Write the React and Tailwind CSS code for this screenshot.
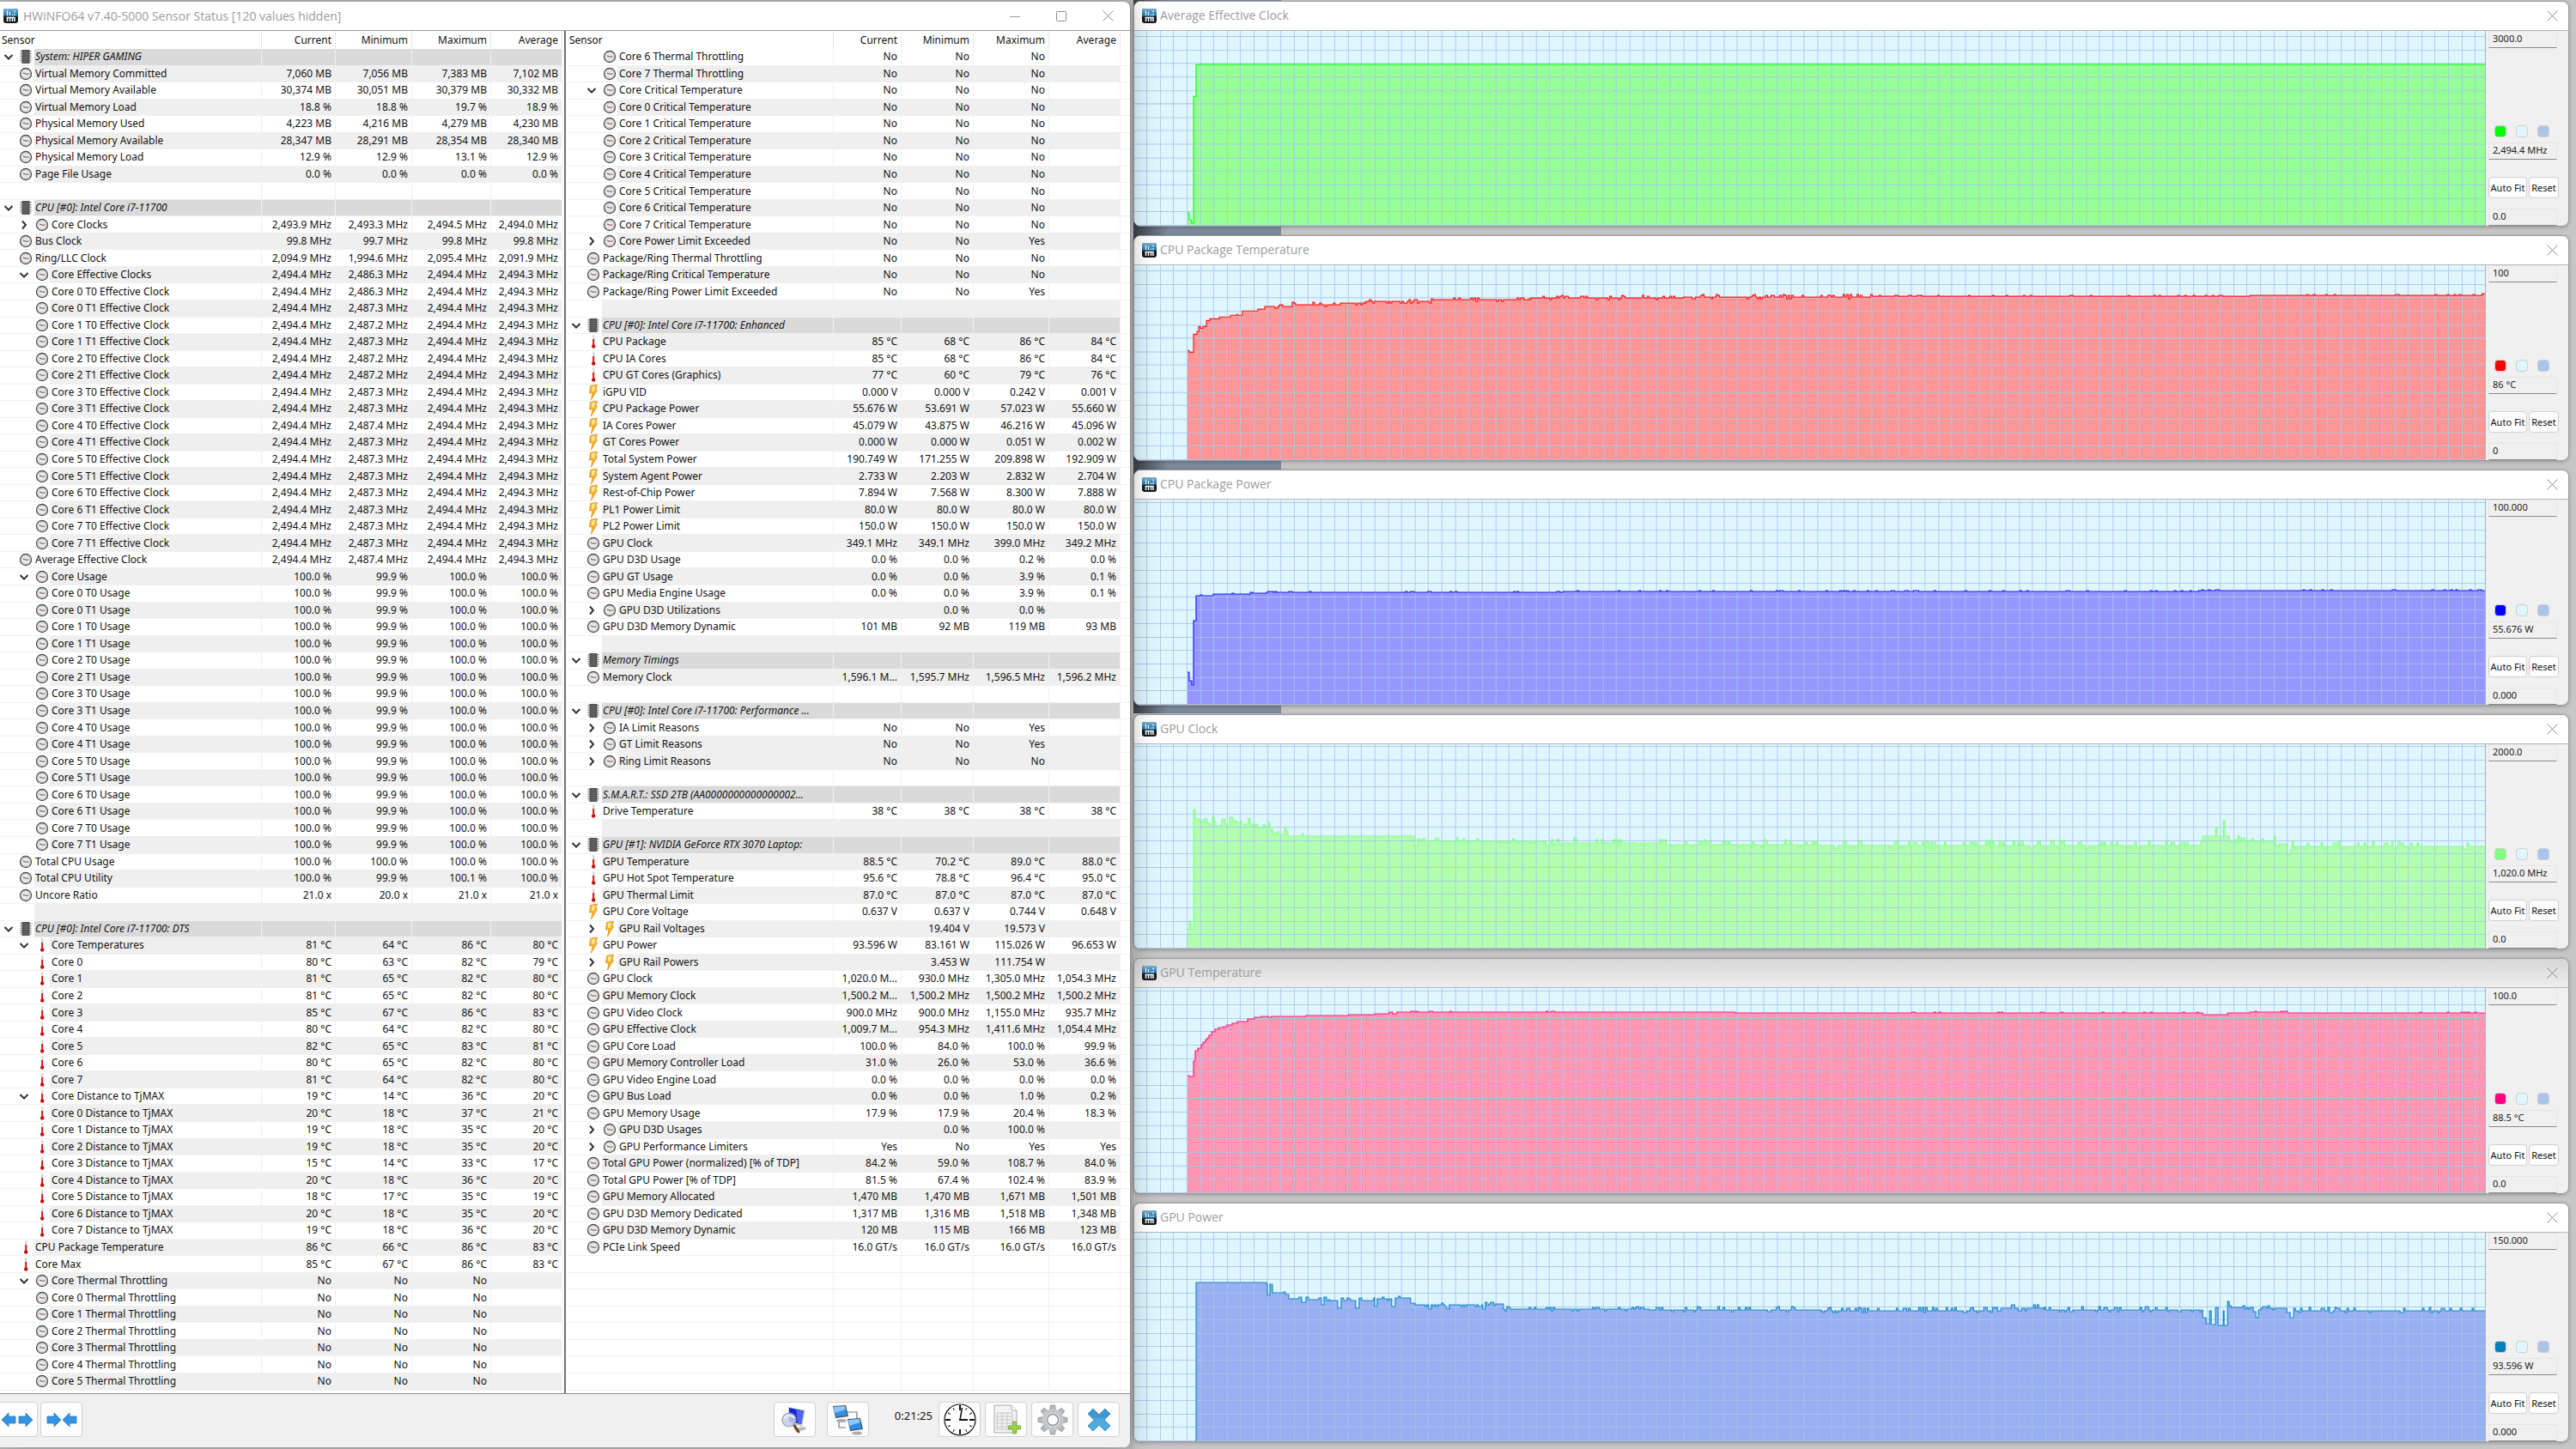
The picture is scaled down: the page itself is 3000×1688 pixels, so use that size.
const TEXT = "font-['Noto_Sans','DejaVu_Sans_Condensed',sans-serif]";
const CAPTION = "font-['Open_Sans','Noto_Sans',sans-serif]";

const group = (label) => ({ type: 'group', label, values: [] });
const blank = () => ({ type: 'blank', label: '', values: [] });
const item = (icon, label, values, extra = {}) => ({
    type: 'item', icon, label, values: values.split('|'), ...extra,
});
const sub = (icon, label, values, arrow) => item(icon, label, values, { nested: true, arrow });

const threads = (suffix, values) =>
    values.map((v, i) => sub('clock', `Core ${Math.floor(i / 2)} T${i % 2} ${suffix}`, v));

const clockMinimums = [
    '2,486.3', '2,487.3', '2,487.2', '2,487.3', '2,487.2', '2,487.2', '2,487.3', '2,487.3',
    '2,487.4', '2,487.3', '2,487.3', '2,487.3', '2,487.3', '2,487.3', '2,487.3', '2,487.3',
];

const leftRows = [
    group('System: HIPER GAMING'),
    item('clock', 'Virtual Memory Committed', '7,060 MB|7,056 MB|7,383 MB|7,102 MB'),
    item('clock', 'Virtual Memory Available', '30,374 MB|30,051 MB|30,379 MB|30,332 MB'),
    item('clock', 'Virtual Memory Load', '18.8 %|18.8 %|19.7 %|18.9 %'),
    item('clock', 'Physical Memory Used', '4,223 MB|4,216 MB|4,279 MB|4,230 MB'),
    item('clock', 'Physical Memory Available', '28,347 MB|28,291 MB|28,354 MB|28,340 MB'),
    item('clock', 'Physical Memory Load', '12.9 %|12.9 %|13.1 %|12.9 %'),
    item('clock', 'Page File Usage', '0.0 %|0.0 %|0.0 %|0.0 %'),
    blank(),
    group('CPU [#0]: Intel Core i7-11700'),
    sub('clock', 'Core Clocks', '2,493.9 MHz|2,493.3 MHz|2,494.5 MHz|2,494.0 MHz', 'closed'),
    item('clock', 'Bus Clock', '99.8 MHz|99.7 MHz|99.8 MHz|99.8 MHz'),
    item('clock', 'Ring/LLC Clock', '2,094.9 MHz|1,994.6 MHz|2,095.4 MHz|2,091.9 MHz'),
    sub('clock', 'Core Effective Clocks', '2,494.4 MHz|2,486.3 MHz|2,494.4 MHz|2,494.3 MHz', 'open'),
    ...threads('Effective Clock', clockMinimums.map((m) => `2,494.4 MHz|${m} MHz|2,494.4 MHz|2,494.3 MHz`)),
    item('clock', 'Average Effective Clock', '2,494.4 MHz|2,487.4 MHz|2,494.4 MHz|2,494.3 MHz'),
    sub('clock', 'Core Usage', '100.0 %|99.9 %|100.0 %|100.0 %', 'open'),
    ...threads('Usage', clockMinimums.map(() => '100.0 %|99.9 %|100.0 %|100.0 %')),
    item('clock', 'Total CPU Usage', '100.0 %|100.0 %|100.0 %|100.0 %'),
    item('clock', 'Total CPU Utility', '100.0 %|99.9 %|100.1 %|100.0 %'),
    item('clock', 'Uncore Ratio', '21.0 x|20.0 x|21.0 x|21.0 x'),
    blank(),
    group('CPU [#0]: Intel Core i7-11700: DTS'),
    sub('temp', 'Core Temperatures', '81 °C|64 °C|86 °C|80 °C', 'open'),
    sub('temp', 'Core 0', '80 °C|63 °C|82 °C|79 °C'),
    sub('temp', 'Core 1', '81 °C|65 °C|82 °C|80 °C'),
    sub('temp', 'Core 2', '81 °C|65 °C|82 °C|80 °C'),
    sub('temp', 'Core 3', '85 °C|67 °C|86 °C|83 °C'),
    sub('temp', 'Core 4', '80 °C|64 °C|82 °C|80 °C'),
    sub('temp', 'Core 5', '82 °C|65 °C|83 °C|81 °C'),
    sub('temp', 'Core 6', '80 °C|65 °C|82 °C|80 °C'),
    sub('temp', 'Core 7', '81 °C|64 °C|82 °C|80 °C'),
    sub('temp', 'Core Distance to TjMAX', '19 °C|14 °C|36 °C|20 °C', 'open'),
    sub('temp', 'Core 0 Distance to TjMAX', '20 °C|18 °C|37 °C|21 °C'),
    sub('temp', 'Core 1 Distance to TjMAX', '19 °C|18 °C|35 °C|20 °C'),
    sub('temp', 'Core 2 Distance to TjMAX', '19 °C|18 °C|35 °C|20 °C'),
    sub('temp', 'Core 3 Distance to TjMAX', '15 °C|14 °C|33 °C|17 °C'),
    sub('temp', 'Core 4 Distance to TjMAX', '20 °C|18 °C|36 °C|20 °C'),
    sub('temp', 'Core 5 Distance to TjMAX', '18 °C|17 °C|35 °C|19 °C'),
    sub('temp', 'Core 6 Distance to TjMAX', '20 °C|18 °C|35 °C|20 °C'),
    sub('temp', 'Core 7 Distance to TjMAX', '19 °C|18 °C|36 °C|20 °C'),
    item('temp', 'CPU Package Temperature', '86 °C|66 °C|86 °C|83 °C'),
    item('temp', 'Core Max', '85 °C|67 °C|86 °C|83 °C'),
    sub('clock', 'Core Thermal Throttling', 'No|No|No|', 'open'),
    ...[0, 1, 2, 3, 4, 5].map((n) => sub('clock', `Core ${n} Thermal Throttling`, 'No|No|No|')),
];

const rightRows = [
    sub('clock', 'Core 6 Thermal Throttling', 'No|No|No|'),
    sub('clock', 'Core 7 Thermal Throttling', 'No|No|No|'),
    sub('clock', 'Core Critical Temperature', 'No|No|No|', 'open'),
    ...[0, 1, 2, 3, 4, 5, 6, 7].map((n) => sub('clock', `Core ${n} Critical Temperature`, 'No|No|No|')),
    sub('clock', 'Core Power Limit Exceeded', 'No|No|Yes|', 'closed'),
    item('clock', 'Package/Ring Thermal Throttling', 'No|No|No|'),
    item('clock', 'Package/Ring Critical Temperature', 'No|No|No|'),
    item('clock', 'Package/Ring Power Limit Exceeded', 'No|No|Yes|'),
    blank(),
    group('CPU [#0]: Intel Core i7-11700: Enhanced'),
    item('temp', 'CPU Package', '85 °C|68 °C|86 °C|84 °C'),
    item('temp', 'CPU IA Cores', '85 °C|68 °C|86 °C|84 °C'),
    item('temp', 'CPU GT Cores (Graphics)', '77 °C|60 °C|79 °C|76 °C'),
    item('bolt', 'iGPU VID', '0.000 V|0.000 V|0.242 V|0.001 V'),
    item('bolt', 'CPU Package Power', '55.676 W|53.691 W|57.023 W|55.660 W'),
    item('bolt', 'IA Cores Power', '45.079 W|43.875 W|46.216 W|45.096 W'),
    item('bolt', 'GT Cores Power', '0.000 W|0.000 W|0.051 W|0.002 W'),
    item('bolt', 'Total System Power', '190.749 W|171.255 W|209.898 W|192.909 W'),
    item('bolt', 'System Agent Power', '2.733 W|2.203 W|2.832 W|2.704 W'),
    item('bolt', 'Rest-of-Chip Power', '7.894 W|7.568 W|8.300 W|7.888 W'),
    item('bolt', 'PL1 Power Limit', '80.0 W|80.0 W|80.0 W|80.0 W'),
    item('bolt', 'PL2 Power Limit', '150.0 W|150.0 W|150.0 W|150.0 W'),
    item('clock', 'GPU Clock', '349.1 MHz|349.1 MHz|399.0 MHz|349.2 MHz'),
    item('clock', 'GPU D3D Usage', '0.0 %|0.0 %|0.2 %|0.0 %'),
    item('clock', 'GPU GT Usage', '0.0 %|0.0 %|3.9 %|0.1 %'),
    item('clock', 'GPU Media Engine Usage', '0.0 %|0.0 %|3.9 %|0.1 %'),
    sub('clock', 'GPU D3D Utilizations', '|0.0 %|0.0 %|', 'closed'),
    item('clock', 'GPU D3D Memory Dynamic', '101 MB|92 MB|119 MB|93 MB'),
    blank(),
    group('Memory Timings'),
    item('clock', 'Memory Clock', '1,596.1 M...|1,595.7 MHz|1,596.5 MHz|1,596.2 MHz'),
    blank(),
    group('CPU [#0]: Intel Core i7-11700: Performance ...'),
    sub('clock', 'IA Limit Reasons', 'No|No|Yes|', 'closed'),
    sub('clock', 'GT Limit Reasons', 'No|No|Yes|', 'closed'),
    sub('clock', 'Ring Limit Reasons', 'No|No|No|', 'closed'),
    blank(),
    group('S.M.A.R.T.: SSD 2TB (AA0000000000000002...'),
    item('temp', 'Drive Temperature', '38 °C|38 °C|38 °C|38 °C'),
    blank(),
    group('GPU [#1]: NVIDIA GeForce RTX 3070 Laptop:'),
    item('temp', 'GPU Temperature', '88.5 °C|70.2 °C|89.0 °C|88.0 °C'),
    item('temp', 'GPU Hot Spot Temperature', '95.6 °C|78.8 °C|96.4 °C|95.0 °C'),
    item('temp', 'GPU Thermal Limit', '87.0 °C|87.0 °C|87.0 °C|87.0 °C'),
    item('bolt', 'GPU Core Voltage', '0.637 V|0.637 V|0.744 V|0.648 V'),
    sub('bolt', 'GPU Rail Voltages', '|19.404 V|19.573 V|', 'closed'),
    item('bolt', 'GPU Power', '93.596 W|83.161 W|115.026 W|96.653 W'),
    sub('bolt', 'GPU Rail Powers', '|3.453 W|111.754 W|', 'closed'),
    item('clock', 'GPU Clock', '1,020.0 M...|930.0 MHz|1,305.0 MHz|1,054.3 MHz'),
    item('clock', 'GPU Memory Clock', '1,500.2 M...|1,500.2 MHz|1,500.2 MHz|1,500.2 MHz'),
    item('clock', 'GPU Video Clock', '900.0 MHz|900.0 MHz|1,155.0 MHz|935.7 MHz'),
    item('clock', 'GPU Effective Clock', '1,009.7 M...|954.3 MHz|1,411.6 MHz|1,054.4 MHz'),
    item('clock', 'GPU Core Load', '100.0 %|84.0 %|100.0 %|99.9 %'),
    item('clock', 'GPU Memory Controller Load', '31.0 %|26.0 %|53.0 %|36.6 %'),
    item('clock', 'GPU Video Engine Load', '0.0 %|0.0 %|0.0 %|0.0 %'),
    item('clock', 'GPU Bus Load', '0.0 %|0.0 %|1.0 %|0.2 %'),
    item('clock', 'GPU Memory Usage', '17.9 %|17.9 %|20.4 %|18.3 %'),
    sub('clock', 'GPU D3D Usages', '|0.0 %|100.0 %|', 'closed'),
    sub('clock', 'GPU Performance Limiters', 'Yes|No|Yes|Yes', 'closed'),
    item('clock', 'Total GPU Power (normalized) [% of TDP]', '84.2 %|59.0 %|108.7 %|84.0 %'),
    item('clock', 'Total GPU Power [% of TDP]', '81.5 %|67.4 %|102.4 %|83.9 %'),
    item('clock', 'GPU Memory Allocated', '1,470 MB|1,470 MB|1,671 MB|1,501 MB'),
    item('clock', 'GPU D3D Memory Dedicated', '1,317 MB|1,316 MB|1,518 MB|1,348 MB'),
    item('clock', 'GPU D3D Memory Dynamic', '120 MB|115 MB|166 MB|123 MB'),
    item('clock', 'PCIe Link Speed', '16.0 GT/s|16.0 GT/s|16.0 GT/s|16.0 GT/s'),
];

const ROW_COUNT = 80;
while (rightRows.length < ROW_COUNT) rightRows.push({ type: 'empty', label: '', values: [] });

const leftShaded = (i) => i % 2 === 1;
const rightShaded = (i) => (i < 42 ? i % 2 === 1 : i % 2 === 0);

// levels: [x, y, jitter] - the line keeps y until the next x
const graphs = [
    {
        title: 'Average Effective Clock', max: '3000.0', now: '2,494.4 MHz', min: '0.0',
        height: 226, line: '#00ff00', fill: '#96ff96', swatch: 'bg-[#00ff00]',
        levels: [[62, 211], [64, 219], [66, 221], [67, 223], [69, 76], [72, 39]],
    },
    {
        title: 'CPU Package Temperature', max: '100', now: '86 °C', min: '0',
        height: 226, line: '#ff0000', fill: '#ff9696', swatch: 'bg-[#ff0000]',
        levels: [
            [62, 99], [64, 101], [69, 80], [73, 77], [75, 71], [77, 73], [80, 71], [84, 64], [88, 62], [99, 60],
            [112, 58], [119, 57], [121, 58], [126, 53], [144, 51], [152, 48], [164, 50], [167, 48, 2], [184, 46, 2],
            [240, 44, 2], [268, 42, 2], [350, 40, 2], [460, 38, 2], [640, 37, 2], [860, 36, 1], [1300, 35, 1], [1571, 33],
        ],
    },
    {
        title: 'CPU Package Power', max: '100.000', now: '55.676 W', min: '0.000',
        height: 239, line: '#0000ff', fill: '#9696ff', swatch: 'bg-[#0000ff]',
        levels: [
            [62, 201], [64, 211], [67, 216], [69, 141], [72, 112], [77, 111], [79, 112], [92, 110], [114, 109],
            [116, 110], [135, 108], [138, 109], [154, 108], [156, 107], [162, 108, 1], [500, 107, 1], [1240, 106, 1],
        ],
    },
    {
        title: 'GPU Clock', max: '2000.0', now: '1,020.0 MHz', min: '0.0',
        height: 238, line: '#80ff80', fill: '#b2ffb0', swatch: 'bg-[#80ff80]',
        levels: [
            [62, 215], [64, 206], [66, 215], [69, 76], [71, 87], [76, 89], [79, 91], [81, 87], [85, 92], [88, 94],
            [91, 84], [93, 90], [95, 95], [102, 87], [106, 93], [108, 95], [111, 85], [115, 89], [119, 91], [124, 89],
            [125, 97], [128, 93], [133, 86], [135, 93], [138, 95], [141, 93], [144, 97], [150, 94], [153, 97],
            [157, 91], [158, 99], [161, 103], [164, 106], [166, 102], [168, 105], [175, 97], [177, 101], [179, 107],
            [195, 104], [197, 107], [326, 118], [330, 110], [333, 113, 3], [480, 115, 4], [620, 117, 4], [800, 118, 4],
            [1243, 113], [1245, 107], [1260, 97], [1262, 107], [1269, 89], [1271, 107], [1276, 114, 3], [1286, 107],
            [1288, 113, 3], [1328, 107], [1330, 116, 3], [1344, 128], [1347, 123], [1349, 113], [1351, 119, 4],
        ],
    },
    {
        title: 'GPU Temperature', max: '100.0', now: '88.5 °C', min: '0.0', dim: true,
        height: 239, line: '#ff0080', fill: '#ff96b2', swatch: 'bg-[#ff0080]',
        levels: [
            [62, 102], [64, 103], [69, 85], [71, 73], [74, 70], [78, 66], [80, 63], [83, 60], [85, 58], [87, 55],
            [90, 51], [94, 48], [98, 46], [104, 45], [108, 43], [114, 41], [120, 39], [132, 36], [140, 34], [148, 33],
            [156, 34], [160, 33], [200, 32], [250, 31], [280, 30], [297, 28], [301, 30], [306, 28], [322, 27],
            [326, 28, 1], [500, 28], [700, 29], [900, 29, 1], [1245, 31, 1], [1274, 29], [1300, 28, 1], [1344, 29], [1480, 29, 1],
        ],
    },
    {
        title: 'GPU Power', max: '150.000', now: '93.596 W', min: '0.000',
        height: 243, line: '#0080c0', fill: '#96b0f2', swatch: 'bg-[#0080c0]',
        levels: [
            [72, 243], [72, 58], [154, 60], [155, 73], [158, 60], [161, 70], [174, 69], [176, 72], [180, 77], [192, 75],
            [195, 81], [200, 75], [203, 78], [215, 76], [218, 84], [221, 75], [224, 79, 1], [237, 88], [241, 76],
            [244, 79, 2], [258, 88], [262, 76], [265, 79, 2], [280, 86], [283, 77, 2], [300, 86], [304, 76, 2],
            [322, 82], [327, 84, 2], [343, 89], [346, 84, 2], [364, 89], [367, 84, 2], [406, 89], [409, 83, 2],
            [430, 89, 2], [600, 90, 3], [800, 91, 3], [1010, 88, 4], [1060, 90, 3], [1245, 99], [1249, 106],
            [1253, 91], [1255, 107], [1260, 87], [1263, 108], [1269, 91], [1270, 108], [1274, 80], [1276, 87, 2],
            [1304, 92], [1307, 99], [1310, 90], [1313, 88, 2], [1343, 93], [1347, 99], [1351, 91, 3],
        ],
    },
];

const GRAPH_WIDTH = 1574;

function stepPath(levels) {
    let seed = 4211;
    let d = `M${levels[0][0]} ${levels[0][1]}`;
    levels.forEach(([x, y, jitter], i) => {
        d += `H${x}V${y}`;
        if (!jitter) return;
        const stop = levels[i + 1] ? levels[i + 1][0] : GRAPH_WIDTH;
        for (let px = x; px < stop; px += 2) {
            seed = (seed * 16807) % 2147483647;
            const r = seed / 2147483647;
            let dy = 0;
            if (jitter === 1) dy = r > 0.9 ? -1 : 0;
            else if (r > 0.95) dy = -jitter * 1.5;
            else if (r > 0.82) dy = -jitter;
            else if (r > 0.72) dy = jitter * 0.8;
            d += `H${px}V${Math.round(y + dy)}`;
        }
    });
    return `${d}H${GRAPH_WIDTH}`;
}

function AppIcon() {
    return (
        <svg viewBox="0 0 17 17" className="size-[17px] shrink-0" aria-hidden="true">
            <defs>
                <linearGradient id="appBlue" x1="0" y1="0" x2="0" y2="1">
                    <stop offset="0" stopColor="#7fb4d2" />
                    <stop offset="1" stopColor="#0a6aa6" />
                </linearGradient>
            </defs>
            <rect width="17" height="17" rx="3" fill="#15181c" />
            <path d="M3 0h11a3 3 0 0 1 3 3v6H0V3a3 3 0 0 1 3-3z" fill="url(#appBlue)" />
            <path d="M4.500 2.500v5.500M7.500 4v4M10.500 6.500V8M13 2.500v2M13 6v2" stroke="#fff" strokeWidth="1.300" />
            <path d="M4.500 10v5M7.500 10v5M10.500 10v5M13 10v5M3.500 10.500h10" stroke="#fff" strokeWidth="1.500" />
        </svg>
    );
}

function ClockIcon() {
    return (
        <svg viewBox="0 0 16 16" className="size-4 shrink-0" aria-hidden="true">
            <circle cx="8" cy="8" r="6.500" fill="#e9e9e9" stroke="#4c4c4c" strokeWidth="1.300" />
            <circle cx="8" cy="8" r="4.800" fill="none" stroke="#cfcfcf" strokeWidth="1" />
            <path d="M5 7l3 1.300 3.500-.3" fill="none" stroke="#7a5346" strokeWidth="1.100" />
        </svg>
    );
}

function TempIcon() {
    return (
        <svg viewBox="0 0 16 16" className="size-4 shrink-0" aria-hidden="true">
            <rect x="7" y="0" width="2.500" height="12" rx="1.200" fill="#d9d9d9" />
            <rect x="7.200" y="5" width="1.900" height="8" fill="#d21414" />
            <circle cx="8.200" cy="13.500" r="2.200" fill="#c80c0c" />
        </svg>
    );
}

function BoltIcon() {
    return (
        <svg viewBox="0 0 16 18" className="h-[18px] w-4 shrink-0" aria-hidden="true">
            <path d="M4.500 1.500L12.500 0l-1.500 6 1.500.5L5.500 18l1.500-8.500-3.500.5z" fill="#f9b32c" stroke="#d98a14" strokeWidth=".7" />
            <path d="M6 2.500l4.500-1L9 7.500 6 8z" fill="#ffe38a" />
        </svg>
    );
}

function ChipIcon() {
    return (
        <svg viewBox="0 0 16 16" className="size-4 shrink-0" aria-hidden="true">
            <path d="M2.500 1v14M13.500 1v14" stroke="#8a8a8a" strokeWidth="2" strokeDasharray="1.500 1.200" />
            <rect x="3.500" y="0" width="9" height="16" fill="#505050" />
            <rect x="5" y="1" width="6" height="14" fill="#5e5e5e" />
        </svg>
    );
}

const icons = { clock: ClockIcon, temp: TempIcon, bolt: BoltIcon };

function Arrow({ open, label }) {
    return (
        <button type="button" aria-label={`Toggle ${label}`} className="flex size-3 items-center justify-center">
            <svg viewBox="0 0 12 12" className="size-3" fill="none" stroke="#333" strokeWidth="2">
                <path d={open ? 'M1.500 4L6 8.500 10.500 4' : 'M4 1.500L8 6l-4 4.500'} />
            </svg>
        </button>
    );
}

function NameCell({ row, shaded }) {
    let bg = 'bg-white';
    if (row.type === 'group') bg = 'bg-[linear-gradient(90deg,#fff_40px,#dadada_40px)]';
    else if (shaded && row.nested) bg = 'bg-[linear-gradient(90deg,#fff_58px,#efefef_58px)]';
    else if (shaded && row.type !== 'empty') bg = 'bg-[linear-gradient(90deg,#fff_40px,#efefef_40px)]';
    const Icon = row.type === 'group' ? ChipIcon : icons[row.icon];

    return (
        <th scope="row" className={`overflow-hidden border-r border-b border-[#f0f0f0] p-0 text-left font-normal ${bg}`}>
            {Icon && (
                <div className="flex h-4 items-center whitespace-nowrap">
                    <span className={`flex shrink-0 ${row.nested ? 'w-[41px] pl-[22px]' : 'w-[22px] pl-1'}`}>
                        {(row.type === 'group' || row.arrow) && (
                            <Arrow open={row.type === 'group' || row.arrow === 'open'} label={row.label} />
                        )}
                    </span>
                    <Icon />
                    <span className={`pl-[3px] ${row.type === 'group' ? 'italic' : ''}`}>{row.label}</span>
                </div>
            )}
        </th>
    );
}

function SensorTable({ rows, isShaded, columns, name }) {
    return (
        <table aria-label={name} className="h-full w-full table-fixed border-separate border-spacing-0 text-xs leading-4 text-[#111]">
            <colgroup>
                <col />
                {columns.map((width, i) => <col key={i} className={width} />)}
            </colgroup>
            <thead>
                <tr className="h-[21px]">
                    <th className="border-r border-[#e5e5e5] p-0 pl-0.5 text-left font-normal">Sensor</th>
                    {['Current', 'Minimum', 'Maximum', 'Average'].map((h) => (
                        <th key={h} className="border-r border-[#e5e5e5] p-0 pr-1 text-right font-normal">{h}</th>
                    ))}
                    {columns.length > 4 && <td />}
                </tr>
            </thead>
            <tbody>
                {rows.map((row, i) => {
                    let bg = 'bg-white';
                    if (row.type === 'group') bg = 'bg-[#dadada]';
                    else if (isShaded(i) && row.type !== 'empty') bg = 'bg-[#efefef]';
                    return (
                        <tr key={i} className="h-[19px]">
                            <NameCell row={row} shaded={isShaded(i)} />
                            {[0, 1, 2, 3].map((c) => (
                                <td key={c} className={`border-r border-b border-[#f0f0f0] p-0 pr-1 text-right whitespace-nowrap ${bg}`}>
                                    {row.values[c]}
                                </td>
                            ))}
                            {columns.length > 4 && <td className="border-b border-[#f0f0f0] p-0" />}
                        </tr>
                    );
                })}
            </tbody>
        </table>
    );
}

function ToolButton({ label, children }) {
    return (
        <button
            type="button"
            aria-label={label}
            className="flex h-[41px] w-[49px] shrink-0 items-center justify-center rounded border border-[#d2d2d2] bg-[#fdfdfd]"
        >
            {children}
        </button>
    );
}

function Toolbar() {
    return (
        <footer className="flex h-[63px] shrink-0 items-start border-t border-[#8c8c8c] bg-[#f0f0f0] pt-[9px] pr-3">
            <div className="-ml-[5px] flex gap-[3px]">
                <ToolButton label="Expand columns">
                    <svg viewBox="0 0 38 20" className="h-5 w-[38px]" fill="#3393e2" stroke="#2a7cc4" strokeWidth=".8">
                        <path d="M1 10l8-8v4h8v8H9v4zM37 10l-8-8v4h-8v8h8v4z" />
                    </svg>
                </ToolButton>
                <ToolButton label="Shrink columns">
                    <svg viewBox="0 0 38 20" className="h-5 w-[38px]" fill="#3393e2" stroke="#2a7cc4" strokeWidth=".8">
                        <path d="M18 10l-8-8v4H2v8h8v4zM20 10l8-8v4h8v8h-8v4z" />
                    </svg>
                </ToolButton>
            </div>
            <div className="ml-auto flex items-start">
                <ToolButton label="Find sensor">
                    <svg viewBox="0 0 34 34" className="size-[34px]">
                        <path d="M10 2l20 4-4 19-16-4z" fill="#c9ccd4" />
                        <path d="M11 3l17 3.500L25 22l-14-3z" fill="#1526c9" />
                        <path d="M19 5l9 1.500L25 22l-4-1z" fill="#4a68e8" />
                        <path d="M16 27l13-2 2 3-12 3z" fill="#b5b8bd" />
                        <path d="M16 22l6 9" stroke="#6d4220" strokeWidth="3" strokeLinecap="round" />
                        <circle cx="11" cy="17" r="8" fill="#c3cfea" fillOpacity=".85" stroke="#9aa0aa" strokeWidth="1.200" />
                        <path d="M5 16c2-5 9-5 12-1" fill="none" stroke="#eef4ff" strokeWidth="2" />
                    </svg>
                </ToolButton>
                <div className="ml-[13px]">
                    <ToolButton label="Remote sensors">
                        <svg viewBox="0 0 40 38" className="h-[38px] w-10">
                            <path d="M18 10h13v10M10 20v8h8" fill="none" stroke="#777" strokeWidth="1.200" />
                            <path d="M3 3l15-1 3 13-15 2z" fill="#4b5158" />
                            <path d="M4 4l13-1 2.500 11L6 15.500z" fill="#2f8fe6" />
                            <path d="M4 4l13-1 .8 4L5 11z" fill="#8cc8fa" />
                            <ellipse cx="13" cy="20" rx="6" ry="2" fill="#a9adb2" />
                            <path d="M20 18l15-1 3 13-15 2z" fill="#4b5158" />
                            <path d="M21 19l13-1 2.500 11L23 30.500z" fill="#2f8fe6" />
                            <path d="M21 19l13-1 .8 4L22 26z" fill="#8cc8fa" />
                            <ellipse cx="31" cy="34.500" rx="6" ry="2" fill="#a9adb2" />
                        </svg>
                    </ToolButton>
                </div>
                <span className="mr-[7px] ml-[30px] pt-2 text-[13px] leading-4 text-[#111]">0:21:25</span>
                <div className="flex gap-[5px]">
                    <ToolButton label="Reset timer">
                        <svg viewBox="0 0 38 38" className="size-[38px]" stroke="#111">
                            <circle cx="19" cy="19" r="18" fill="#fff" strokeWidth="1.200" />
                            {Array.from({ length: 12 }, (_, i) => (
                                <path
                                    key={i}
                                    d={i % 3 ? 'M19 3v3' : 'M19 2v6'}
                                    strokeWidth={i % 3 ? 1 : 2}
                                    transform={`rotate(${i * 30} 19 19)`}
                                />
                            ))}
                            <path d="M19 19l2.500-14" strokeWidth="1.500" />
                            <path d="M18 19h10" strokeWidth="2" />
                        </svg>
                    </ToolButton>
                    <ToolButton label="Start logging">
                        <svg viewBox="0 0 36 36" className="size-9">
                            <path d="M4 1h20l6 6v26H4z" fill="#f2f2f2" stroke="#a9a9a9" />
                            <path d="M24 1v6h6" fill="#fff" stroke="#a9a9a9" />
                            <path d="M7 10h18M7 14h18M7 18h18M7 22h18M7 26h18M7 29h18M7 10v19M13 10v19M19 10v19M25 10v19" fill="none" stroke="#c6c6c6" />
                            <path d="M25.500 20h4v5h5v4h-5v5h-4v-5h-5v-4h5z" fill="#9bd04a" stroke="#7fb238" />
                        </svg>
                    </ToolButton>
                    <ToolButton label="Settings">
                        <svg viewBox="0 0 38 38" className="size-[38px]" stroke="#8f9496" strokeWidth=".8">
                            {Array.from({ length: 8 }, (_, i) => (
                                <path key={i} d="M15.500 8l1-6h5l1 6z" fill="#b4b9bb" transform={`rotate(${i * 45} 19 19)`} />
                            ))}
                            <circle cx="19" cy="19" r="12.500" fill="#c3c7c9" stroke="none" />
                            <circle cx="19" cy="19" r="9" fill="#e2e4e5" stroke="#b3b8ba" />
                            <circle cx="19" cy="19" r="6.500" fill="#fdfdfd" strokeWidth="1.500" />
                        </svg>
                    </ToolButton>
                    <ToolButton label="Close sensors">
                        <svg viewBox="0 0 30 30" className="size-[30px]">
                            <path d="M8 2l7 7 7-7 6 6-7 7 7 7-6 6-7-7-7 7-6-6 7-7-7-7z" fill="#4fabde" stroke="#3b93c8" />
                            <path d="M8 2l7 7 7-7 6 6-5 5H7L2 8z" fill="#2f86bd" fillOpacity=".5" />
                        </svg>
                    </ToolButton>
                </div>
            </div>
        </footer>
    );
}

function CloseGlyph() {
    return (
        <svg viewBox="0 0 13 13" className="size-[13px]" stroke="#8a8a8a" fill="none">
            <path d="M.5.5l12 12M12.500.5l-12 12" />
        </svg>
    );
}

function SensorWindow() {
    return (
        <section className="relative z-10 my-0.5 flex min-h-0 flex-1 flex-col overflow-hidden rounded-r-lg border-r border-[#8f8f8f] bg-white shadow-[0_0_30px_rgba(0,0,0,0.3)]">
            <header className={`flex h-[34px] shrink-0 items-center border-b border-[#9a9ca0] pl-1 ${CAPTION}`}>
                <AppIcon />
                <h1 className="pl-1.5 text-sm text-[#9b9b9b]">HWiNFO64 v7.40-5000 Sensor Status [120 values hidden]</h1>
                <div className="ml-auto flex items-center gap-[42px] pr-[19px]">
                    <button type="button" aria-label="Minimize" className="flex size-3 items-center">
                        <svg viewBox="0 0 12 12" className="size-3" stroke="#999"><path d="M0 6.500h12" /></svg>
                    </button>
                    <button type="button" aria-label="Maximize">
                        <svg viewBox="0 0 12 12" className="size-3" stroke="#888" fill="none">
                            <rect x=".5" y=".5" width="11" height="11" rx="1" />
                        </svg>
                    </button>
                    <button type="button" aria-label="Close"><CloseGlyph /></button>
                </div>
            </header>
            <div className="flex min-h-0 flex-1">
                <div className="flex-1 pr-0.5 pb-[3px]">
                    <SensorTable
                        name="Sensors, first column"
                        rows={leftRows}
                        isShaded={leftShaded}
                        columns={['w-[86px]', 'w-[89px]', 'w-[92px]', 'w-[83px]']}
                    />
                </div>
                <div className="flex-1 border-l-2 border-[#6e7074] pb-[3px] pl-0.5">
                    <SensorTable
                        name="Sensors, second column"
                        rows={rightRows}
                        isShaded={rightShaded}
                        columns={['w-[79px]', 'w-[84px]', 'w-[88px]', 'w-[83px]', 'w-[11px]']}
                    />
                </div>
            </div>
            <Toolbar />
        </section>
    );
}

function Graph({ graph }) {
    const { height, levels, line, fill } = graph;
    const path = stepPath(levels);
    const rows = Array.from({ length: 16 }, (_, i) => Math.round(height - i * 15.65) - 0.5).filter((y) => y > 0);
    return (
        <svg
            viewBox={`0 0 ${GRAPH_WIDTH} ${height}`}
            preserveAspectRatio="none"
            className="min-w-0 flex-1 border-r border-[#a9b4bc] bg-[#dff6fe]"
            role="img"
            aria-label={graph.title}
        >
            <path d={`${path}V${height}H${levels[0][0]}Z`} fill={fill} />
            <g stroke="#a6c4ec" strokeOpacity=".85">
                {Array.from({ length: 100 }, (_, i) => (
                    <path key={i} d={`M${Math.round(14 + i * 15.64) + 0.5} 0V${height}`} />
                ))}
                {rows.map((y) => <path key={y} d={`M0 ${y}H${GRAPH_WIDTH}`} />)}
            </g>
            <path d={path} fill="none" stroke={line} strokeWidth="1.200" strokeOpacity=".85" />
        </svg>
    );
}

function Field({ label, value, className = '' }) {
    return (
        <input
            aria-label={label}
            defaultValue={value}
            className={`block h-5 w-20 border border-[#e6e6e6] border-b-[#8a8a8a] bg-transparent px-1 pb-[3px] text-[11px] leading-4 text-[#222] ${className}`}
        />
    );
}

function GraphWindow({ graph }) {
    const swatchBase = 'size-[14px] rounded-sm border border-[#cfcfcf]';
    return (
        <section className="flex min-h-0 flex-col overflow-hidden rounded-lg border border-[#9c9c9c] bg-[#f0f0f0] shadow-[0_1px_4px_rgba(0,0,0,0.25)]">
            <header
                className={`flex h-[34px] shrink-0 items-center border-b border-[#b4b8bc] pr-3 pb-px pl-[9px] ${CAPTION} ${
                    graph.dim ? 'bg-linear-to-b from-[#d6d6d6] to-[#eeeeee]' : 'bg-white'
                }`}
            >
                <AppIcon />
                <h2 className="pl-1 text-sm text-[#9b9b9b]">{graph.title}</h2>
                <button type="button" aria-label={`Close ${graph.title}`} className="ml-auto"><CloseGlyph /></button>
            </header>
            <div className="flex min-h-0 flex-1">
                <Graph graph={graph} />
                <div className="flex w-24 shrink-0 flex-col pl-[3px]">
                    <Field label="Graph maximum" value={graph.max} />
                    <div className="mt-auto flex gap-[11px] pl-[7px]">
                        <button type="button" aria-label="Line color" className={`${swatchBase} ${graph.swatch}`} />
                        <button type="button" aria-label="Background color" className={`${swatchBase} bg-[#dff6fe]`} />
                        <button type="button" aria-label="Grid color" className={`${swatchBase} bg-[#aac4ea]`} />
                    </div>
                    <Field label="Current value" value={graph.now} className="mt-1.5" />
                    <div className="mt-5 flex gap-0.5 text-[11px] leading-4 text-[#111]">
                        <button type="button" className="h-[25px] w-[45px] rounded border border-[#d0d0d0] bg-[#fdfdfd] whitespace-nowrap">Auto Fit</button>
                        <button type="button" className="h-[25px] w-[35px] rounded border border-[#d0d0d0] bg-[#fdfdfd]">Reset</button>
                    </div>
                    <Field label="Graph minimum" value={graph.min} className="mt-3" />
                </div>
            </div>
        </section>
    );
}

export default function App() {
    return (
        <main className={`flex h-screen overflow-hidden bg-[#c6c6c6] ${TEXT}`}>
            <div className="flex w-[44%] flex-col bg-[#bdbdbd] pr-[3px]">
                <SensorWindow />
            </div>
            <div className="grid min-w-0 flex-1 grid-rows-[263fr_263fr_275fr_274fr_275fr_279fr] gap-2.5 bg-[#c6c6c6] bg-[linear-gradient(90deg,#3c4148,#7c8a9c_40px)] bg-[length:172px_831px] bg-no-repeat pt-px pr-2 pb-2">
                {graphs.map((graph) => <GraphWindow key={graph.title} graph={graph} />)}
            </div>
        </main>
    );
}
